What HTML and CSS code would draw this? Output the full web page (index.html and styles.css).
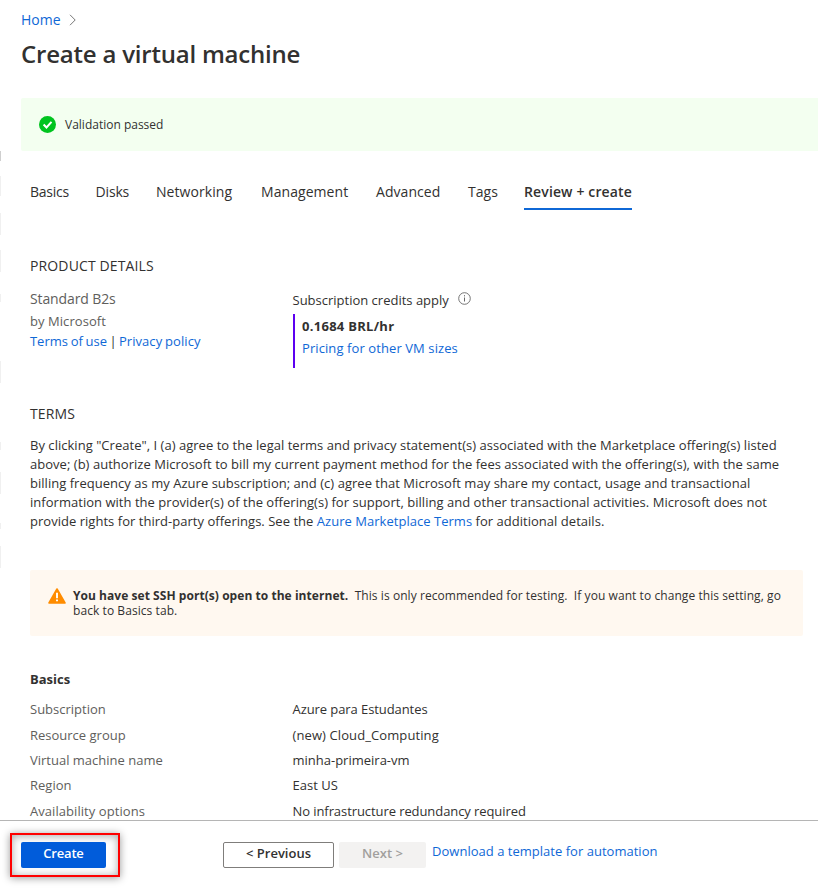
FILE: index.html
```html
<!DOCTYPE html>
<html lang="en">
<head>
<meta charset="utf-8">
<title>Create a virtual machine</title>
<link rel="stylesheet" href="styles.css">
</head>
<body>
<div class="menu-edge"><i class="dot"></i><i class="s1"></i><i class="s2"></i><i class="s3"></i><i class="s4"></i><i class="s5"></i><i class="s6"></i><i class="s7"></i><i class="s8"></i><i class="s9"></i></div>
<main class="page">
  <nav class="breadcrumb">
    <a class="home">Home</a>
    <svg width="8" height="12" viewBox="0 0 8 12"><path d="M1 .8 6.2 6 1 11.2" fill="none" stroke="#777" stroke-width="1"/></svg>
  </nav>
  <h1>Create a virtual machine</h1>

  <div class="validation">
    <svg width="17" height="17" viewBox="0 0 17 17"><circle cx="8.5" cy="8.5" r="8.5" fill="#00c41f"/><path d="m4.6 8.5 2.9 3 5-5.6" fill="none" stroke="#fff" stroke-width="2"/></svg>
    <span>Validation passed</span>
  </div>

  <div class="content">
    <nav class="tabs">
      <a class="t-basics">Basics</a><a class="t-disks">Disks</a><a class="t-net">Networking</a><a class="t-man">Management</a><a class="t-adv">Advanced</a><a class="t-tags">Tags</a><a class="active">Review + create</a>
    </nav>

    <h2>PRODUCT DETAILS</h2>
    <section class="product">
      <div class="offer">
        <div class="sku">Standard B2s</div>
        <div class="vendor">by Microsoft</div>
        <div class="legal"><a class="tou">Terms of use</a> | <a>Privacy policy</a></div>
      </div>
      <div class="price">
        <div class="credits">Subscription credits apply
          <svg width="13" height="13" viewBox="0 0 13 13"><circle cx="6.5" cy="6.5" r="5.8" fill="none" stroke="#666" stroke-width=".9"/><path d="M6.5 5.5v4M6.5 3.2v1.2" stroke="#666" stroke-width="1"/></svg>
        </div>
        <div class="rate">
          <strong>0.1684 BRL/hr</strong>
          <a>Pricing for other VM sizes</a>
        </div>
      </div>
    </section>

    <h2>TERMS</h2>
    <p class="terms">By clicking "Create", I (a) agree to the legal terms and privacy statement(s) associated with the Marketplace offering(s) listed<br>above; (b) authorize Microsoft to bill my current payment method for the fees associated with the offering(s), with the same<br>billing frequency as my Azure subscription; and (c) agree that Microsoft may share my contact, usage and transactional<br>information with the provider(s) of the offering(s) for support, billing and other transactional activities. Microsoft does not<br>provide rights for third-party offerings. See the <a>Azure Marketplace Terms</a> for additional details.</p>

    <div class="warning">
      <svg width="18" height="16" viewBox="0 0 18 16"><path d="M9 1 17 15H1Z" fill="#ff8c00" stroke="#ff8c00" stroke-width="1.6" stroke-linejoin="round"/><path d="M9 4.8v5.4M9 11.4v1.9" stroke="#fff" stroke-width="1.9"/></svg>
      <p><strong>You have set SSH port(s) open to the internet.</strong>&nbsp; This is only recommended for testing.&nbsp; If you want to change this setting, go<br>back to Basics tab.</p>
    </div>

    <h3>Basics</h3>
    <dl class="summary">
      <dt>Subscription</dt><dd class="tight">Azure para Estudantes</dd>
      <dt>Resource group</dt><dd class="loose">(new) Cloud_Computing</dd>
      <dt>Virtual machine name</dt><dd>minha-primeira-vm</dd>
      <dt>Region</dt><dd>East US</dd>
      <dt class="avail">Availability options</dt><dd class="tight">No infrastructure redundancy required</dd>
    </dl>
  </div>
</main>
<footer>
  <div class="highlight"><button class="primary">Create</button></div>
  <button class="prev">&lt; Previous</button>
  <button class="next" disabled>Next &gt;</button>
  <a>Download a template for automation</a>
</footer>
</body>
</html>
```
FILE: styles.css
```css
* { box-sizing: border-box; }
body {
  margin: 0;
  height: 892px;
  overflow: hidden;
  position: relative;
  display: flex;
  flex-direction: column;
  background: #fff;
  color: #323130;
  font: 13px/20px "Open Sans", "Noto Sans", sans-serif;
}
h1, h2, h3, p, dl, dd { margin: 0; }
a { color: #0f68d6; }
svg { display: block; flex: none; }

/* Cards of the blade behind, peeking in at the left edge */
.menu-edge { position: absolute; left: 0; top: 0; width: 1px; }
.menu-edge i { position: absolute; left: 0; width: 1px; height: 22px; background: #f0f0f0; }
.menu-edge .dot { top: 151px; height: 10px; background: #cfcfcf; }
.menu-edge .s1 { top: 176px; height: 20px; }
.menu-edge .s2 { top: 213px; }
.menu-edge .s3 { top: 250px; }
.menu-edge .s4 { top: 294px; height: 8px; }
.menu-edge .s5 { top: 361px; }
.menu-edge .s6 { top: 442px; height: 8px; }
.menu-edge .s7 { top: 472px; }
.menu-edge .s8 { top: 523px; height: 6px; }
.menu-edge .s9 { top: 546px; }

.page { height: 820px; overflow: hidden; padding: 10px 0 0 21px; }
.breadcrumb { display: flex; align-items: center; height: 20px; font-size: 14px; gap: 8px; }
.home { letter-spacing: .05px; }
h1 { height: 68px; padding-top: 8px; font-size: 24px; line-height: 32px; font-weight: 600; letter-spacing: -.21px; }
.validation {
  display: flex; align-items: center; gap: 9px;
  height: 53px; padding-left: 18px;
  background: #f3fff0; border-radius: 2px 0 0 2px; font-size: 12px;
}
.content { padding: 0 15px 0 9px; }

.tabs { display: flex; height: 59px; padding-top: 26px; margin-bottom: 46px; font-size: 14px; line-height: 30px; }
.tabs a { color: #323130; white-space: nowrap; flex: none; }
.t-basics { width: 65.5px; letter-spacing: -.25px; }
.t-disks { width: 60.5px; letter-spacing: -.15px; }
.t-net { width: 105px; letter-spacing: .06px; }
.t-man { width: 115px; letter-spacing: .06px; }
.t-adv { width: 92px; letter-spacing: .06px; }
.t-tags { width: 56px; letter-spacing: .06px; }
.tabs .active { width: 108px; height: 33px; font-weight: 600; letter-spacing: .13px; border-bottom: 2px solid #0f68d6; }

h2 { height: 20px; font-size: 14px; line-height: 20px; font-weight: 400; letter-spacing: .13px; }
.product { display: grid; grid-template-columns: 262.5px 1fr; height: 128px; padding-top: 13px; }
.offer { color: #605e5c; }
.sku { font-size: 14px; letter-spacing: -.12px; }
.vendor { padding-top: 2px; letter-spacing: .06px; }
.legal { color: #323130; word-spacing: -.5px; }
.tou { letter-spacing: -.04px; margin-right: -.3px; }
.legal a:last-child { letter-spacing: .05px; margin-left: -.6px; }
.credits { display: flex; gap: 9.5px; padding-top: 1px; height: 25px; }
.credits svg { margin-top: 2px; }
.rate { display: flex; flex-direction: column; width: 180px; height: 54px; margin-left: .5px; padding: 2px 0 0 7px; border-left: 2px solid #5c00f0; }
.rate strong { height: 22px; letter-spacing: .28px; }
.rate a { letter-spacing: .09px; }
.terms { padding-top: 12px; height: 146px; line-height: 19px; letter-spacing: .028px; white-space: nowrap; }

.warning {
  display: flex; gap: 7.5px; width: 773px; height: 66px; padding: 18px 0 0 17.5px;
  background: #fff8f0; border-radius: 2px; font-size: 12px; line-height: 15px;
}
.warning svg { margin-top: -.5px; }
.warning p { letter-spacing: .07px; white-space: nowrap; }
.warning strong { letter-spacing: .05px; }
h3 { margin-top: 33px; font-size: 13px; line-height: 20px; }
.summary { display: grid; grid-template-columns: 262.5px 1fr; grid-template-rows: 26px 25px 25px 26px 25px; padding-top: 8px; line-height: 25px; }
dt { color: #605e5c; }
.tight { letter-spacing: -.08px; }
.loose { letter-spacing: .1px; }
.avail { letter-spacing: .06px; }

footer { display: flex; align-items: flex-start; height: 72px; padding: 12px 0 0 10px; border-top: 1px solid #b5b5b5; background: #fff; }
button { height: 26px; padding: 0 0 4px; border: 0; border-radius: 2px; font: 600 13px/22px "Open Sans", sans-serif; }
.highlight { width: 110px; height: 44px; padding: 7px 9px; border: 2px solid #ff0000; box-shadow: 0 1px 8px rgba(0,0,0,.4), inset 0 1px 8px rgba(0,0,0,.35); }
.primary { display: block; width: 85px; background: #015cda; color: #fff; letter-spacing: -.2px; }
.prev { margin: 9px 5px 0 103px; width: 111px; border: 1px solid #7f7d7b; background: #fff; color: #323130; line-height: 20px; }
.next { margin-top: 9px; width: 87px; background: #f3f2f1; color: #a19f9d; }
footer > a { margin: 8px 0 0 6px; line-height: 20px; letter-spacing: .02px; }
```
